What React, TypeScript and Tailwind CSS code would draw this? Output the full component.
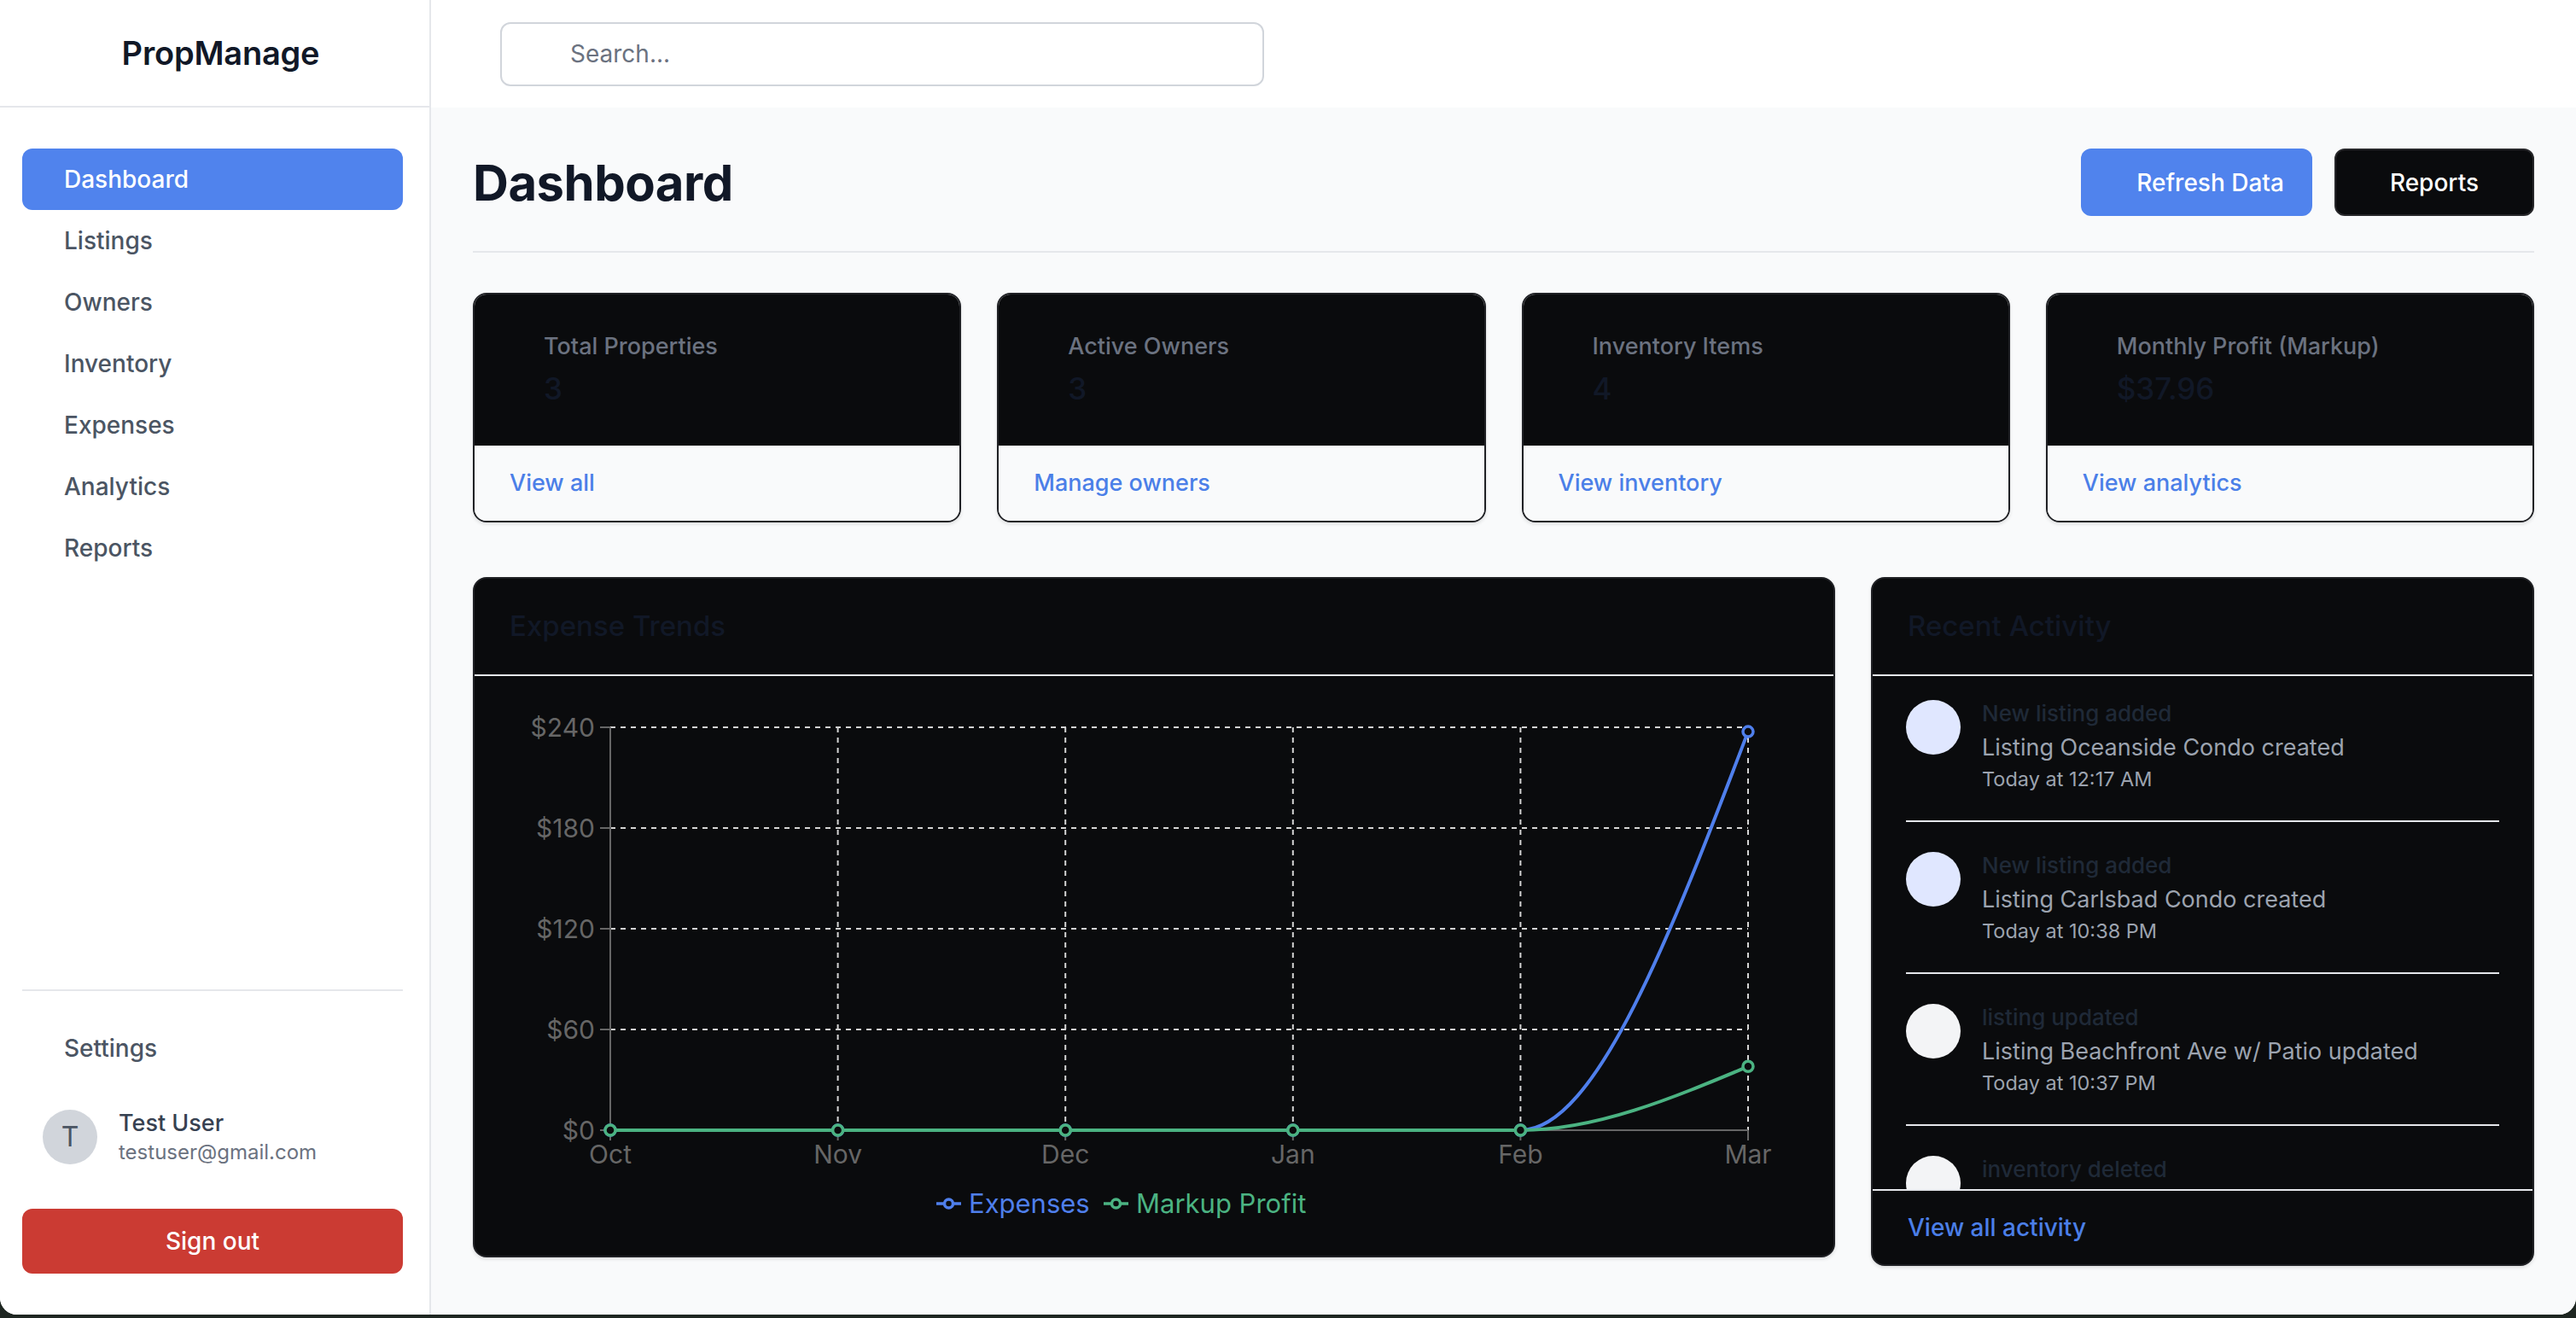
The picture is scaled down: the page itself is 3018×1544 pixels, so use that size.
import React from "react";

const NAV = ["Dashboard", "Listings", "Owners", "Inventory", "Expenses", "Analytics", "Reports"];

const STATS = [
  { label: "Total Properties", value: "3", link: "View all" },
  { label: "Active Owners", value: "3", link: "Manage owners" },
  { label: "Inventory Items", value: "4", link: "View inventory" },
  { label: "Monthly Profit (Markup)", value: "$37.96", link: "View analytics" },
];

const ACTIVITY = [
  { title: "New listing added", desc: "Listing Oceanside Condo created", time: "Today at 12:17 AM", bg: "bg-[#e0e7ff]" },
  { title: "New listing added", desc: "Listing Carlsbad Condo created", time: "Today at 10:38 PM", bg: "bg-[#e0e7ff]" },
  { title: "listing updated", desc: "Listing Beachfront Ave w/ Patio updated", time: "Today at 10:37 PM", bg: "bg-[#f3f4f6]" },
  { title: "inventory deleted", desc: "", time: "", bg: "bg-[#f3f4f6]" },
];

const BLUE = "#4f7fec";
const GREEN = "#4bb382";

function Chart() {
  const x0 = 159;
  const x1 = 1492;
  const yTop = 60;
  const yBot = 532;
  const months = ["Oct", "Nov", "Dec", "Jan", "Feb", "Mar"];
  const step = (x1 - x0) / 5;
  const xs = months.map((_, i) => x0 + i * step);
  const yOf = (v: number) => yBot - (v * (yBot - yTop)) / 240;
  const ticks = [0, 60, 120, 180, 240];
  const curve = (v: number) => {
    const ya = yBot;
    const yb = yOf(v);
    const xa = xs[4];
    const xb = xs[5];
    const dx = (xb - xa) / 3;
    const p2y = yb + 0.5 * (ya - yb);
    return `M${x0},${yBot} L${xa},${yBot} C${xa + dx},${ya} ${xb - dx},${p2y} ${xb},${yb}`;
  };
  const expY = yOf(237.4);
  const mkY = yOf(37.96);
  return (
    <svg width="1591" height="679" viewBox="0 0 1591 679" className="block">
      {ticks.slice(1).map((t) => (
        <line key={t} x1={x0} x2={x1} y1={yOf(t)} y2={yOf(t)} stroke="#d4d4d4" strokeWidth="2" strokeDasharray="6 6" />
      ))}
      {xs.slice(1).map((x, i) => (
        <line key={i} x1={x} x2={x} y1={yTop} y2={yBot} stroke="#d4d4d4" strokeWidth="2" strokeDasharray="6 6" />
      ))}
      <line x1={x0} x2={x0} y1={yTop} y2={yBot} stroke="#666" strokeWidth="2" />
      <line x1={x0} x2={x1} y1={yBot} y2={yBot} stroke="#666" strokeWidth="2" />
      {ticks.map((t) => (
        <g key={t}>
          <line x1={x0 - 12} x2={x0} y1={yOf(t)} y2={yOf(t)} stroke="#666" strokeWidth="2" />
          <text x={x0 - 18} y={yOf(t)} dy="0.36em" textAnchor="end" fill="#666" fontSize="30">
            ${t}
          </text>
        </g>
      ))}
      {xs.map((x, i) => (
        <g key={i}>
          <line x1={x} x2={x} y1={yBot} y2={yBot + 12} stroke="#666" strokeWidth="2" />
          <text x={x} y={yBot + 28} dy="0.36em" textAnchor="middle" fill="#666" fontSize="30">
            {months[i]}
          </text>
        </g>
      ))}
      <path d={curve(237.4)} fill="none" stroke={BLUE} strokeWidth="4" />
      {xs.map((x, i) => (
        <circle key={i} cx={x} cy={i === 5 ? expY : yBot} r="6" fill="#0a0b0d" stroke={BLUE} strokeWidth="3.5" />
      ))}
      <path d={curve(37.96)} fill="none" stroke={GREEN} strokeWidth="4" />
      {xs.map((x, i) => (
        <circle key={i} cx={x} cy={i === 5 ? mkY : yBot} r="6" fill="#0a0b0d" stroke={GREEN} strokeWidth="3.5" />
      ))}
      <line x1="541" x2="570" y1="618" y2="618" stroke={BLUE} strokeWidth="3.5" />
      <circle cx="555.5" cy="618" r="5" fill="#0a0b0d" stroke={BLUE} strokeWidth="3.5" />
      <text x="579" y="618" dy="0.36em" fill={BLUE} fontSize="31">
        Expenses
      </text>
      <line x1="737" x2="766" y1="618" y2="618" stroke={GREEN} strokeWidth="3.5" />
      <circle cx="751.5" cy="618" r="5" fill="#0a0b0d" stroke={GREEN} strokeWidth="3.5" />
      <text x="775" y="618" dy="0.36em" fill={GREEN} fontSize="31">
        Markup Profit
      </text>
    </svg>
  );
}

export default function App() {
  return (
    <div className="w-[3018px] h-[1544px] bg-[#1e2621] overflow-hidden font-['Inter','Noto_Sans',sans-serif]">
      <div className="flex h-[1540px] rounded-b-[20px] overflow-hidden bg-white">
        {/* Sidebar */}
        <aside className="w-[505px] shrink-0 flex flex-col bg-white border-r-2 border-[#e5e7eb]">
          <div className="h-[126px] border-b-2 border-[#e5e7eb] flex items-center justify-center pl-[14px]">
            <span className="text-[38px] font-semibold text-[#111827] tracking-[-0.2px]">PropManage</span>
          </div>
          <nav className="pt-[48px] pl-[26px] pr-[31px] flex flex-col">
            {NAV.map((n, i) => (
              <div
                key={n}
                className={
                  i === 0
                    ? "h-[72px] flex items-center pl-[49px] rounded-[12px] bg-[#5083ed] text-white text-[28px] font-medium"
                    : "h-[72px] flex items-center pl-[49px] rounded-[12px] text-[#4b5563] text-[28px] font-medium"
                }
              >
                {n}
              </div>
            ))}
          </nav>
          <div className="flex-1" />
          <div className="ml-[26px] mr-[31px] border-t-2 border-[#e5e7eb]" />
          <div className="mt-[31px] ml-[26px] mr-[31px] h-[72px] flex items-center pl-[49px] text-[28px] font-medium text-[#4b5563]">
            Settings
          </div>
          <div className="mt-[36px] ml-[26px] mr-[31px] pl-[24px] h-[64px] flex items-center">
            <div className="w-[64px] h-[64px] rounded-full bg-[#d1d5db] flex items-center justify-center text-[32px] text-[#4b5563]">
              T
            </div>
            <div className="ml-[25px] flex flex-col">
              <span className="text-[27px] leading-[36px] font-medium text-[#374151]">Test User</span>
              <span className="text-[24px] leading-[32px] text-[#6b7280]">testuser@gmail.com</span>
            </div>
          </div>
          <div className="mt-[52px] ml-[26px] mr-[31px] h-[76px] rounded-[12px] bg-[#cb3b33] flex items-center justify-center text-white text-[28px] font-medium">
            Sign out
          </div>
          <div className="h-[48px]" />
        </aside>

        {/* Main */}
        <main className="flex-1 flex flex-col bg-[#f9fafb]">
          <div className="h-[126px] bg-white flex items-center pl-[81px]">
            <input
              placeholder="Search..."
              className="w-[895px] h-[75px] border-2 border-[#d1d5db] rounded-[12px] pl-[80px] text-[28px] text-[#111827] placeholder:text-[#6b7280] bg-white outline-none"
            />
          </div>

          <div className="px-[49px] pt-[48px]">
            <div className="flex items-center justify-between pb-[41px] border-b-2 border-[#e5e7eb]">
              <h1 className="text-[58px] leading-none font-bold text-[#111827] tracking-[-0.5px]">Dashboard</h1>
              <div className="flex gap-[26px]">
                <button className="h-[79px] pl-[65px] pr-[33px] rounded-[12px] bg-[#5083ed] text-white text-[28px] font-medium">
                  Refresh Data
                </button>
                <button className="h-[79px] px-[63px] rounded-[12px] bg-[#0a0b0d] border-2 border-[#27272a] text-white text-[28px] font-medium">
                  Reports
                </button>
              </div>
            </div>

            <div className="mt-[47px] grid grid-cols-4 gap-[42px]">
              {STATS.map((s) => (
                <div
                  key={s.label}
                  className="h-[269px] rounded-[16px] border-2 border-[#1f2024] overflow-hidden flex flex-col shadow-[0_2px_4px_rgba(0,0,0,0.12)]"
                >
                  <div className="h-[177px] bg-[#0a0b0d] pl-[81px] pt-[43px]">
                    <div className="text-[27px] leading-[36px] font-medium text-[#6b7280]">{s.label}</div>
                    <div className="mt-[7px] text-[35px] leading-[48px] font-medium text-[#111827]">{s.value}</div>
                  </div>
                  <div className="flex-1 bg-[#f9fafb] flex items-center px-[41px] text-[27px] font-medium text-[#4b7fe8]">
                    {s.link}
                  </div>
                </div>
              ))}
            </div>

            <div className="mt-[64px] grid grid-cols-3 gap-[42px] items-start">
              <div className="col-span-2 rounded-[16px] border-2 border-[#1f2024] bg-[#0a0b0d] overflow-hidden shadow-[0_2px_4px_rgba(0,0,0,0.12)]">
                <div className="h-[114px] border-b-2 border-[#e5e7eb] flex items-center px-[41px]">
                  <span className="text-[33px] font-medium text-[#111827]">Expense Trends</span>
                </div>
                <div className="h-[679px]">
                  <Chart />
                </div>
              </div>

              <div className="rounded-[16px] border-2 border-[#1f2024] bg-[#0a0b0d] overflow-hidden shadow-[0_2px_4px_rgba(0,0,0,0.12)]">
                <div className="h-[114px] border-b-2 border-[#e5e7eb] flex items-center px-[41px]">
                  <span className="text-[33px] font-medium text-[#111827]">Recent Activity</span>
                </div>
                <div className="h-[601px] overflow-hidden px-[39px]">
                  <ul>
                    {ACTIVITY.map((a, i) => (
                      <li
                        key={i}
                        className={
                          i === 0
                            ? "flex items-start pt-[24px] pb-[32px] border-b-2 border-[#e5e7eb]"
                            : i === 3
                            ? "flex items-start pt-[31px]"
                            : "flex items-start pt-[31px] pb-[32px] border-b-2 border-[#e5e7eb]"
                        }
                      >
                        <div className={`mt-[4px] w-[64px] h-[64px] rounded-full shrink-0 ${a.bg}`} />
                        <div className="ml-[25px] flex flex-col">
                          <span className="text-[26px] leading-[40px] font-medium text-[#1f2937]">{a.title}</span>
                          {a.desc ? (
                            <span className="text-[27px] leading-[40px] text-[#9ca3af]">{a.desc}</span>
                          ) : null}
                          {a.time ? (
                            <span className="text-[23.5px] leading-[33px] text-[#9ca3af]">{a.time}</span>
                          ) : null}
                        </div>
                      </li>
                    ))}
                  </ul>
                </div>
                <div className="h-[88px] border-t-2 border-[#e5e7eb] flex items-center px-[41px] text-[28px] font-medium text-[#4b7fe8]">
                  View all activity
                </div>
              </div>
            </div>
          </div>
        </main>
      </div>
    </div>
  );
}
